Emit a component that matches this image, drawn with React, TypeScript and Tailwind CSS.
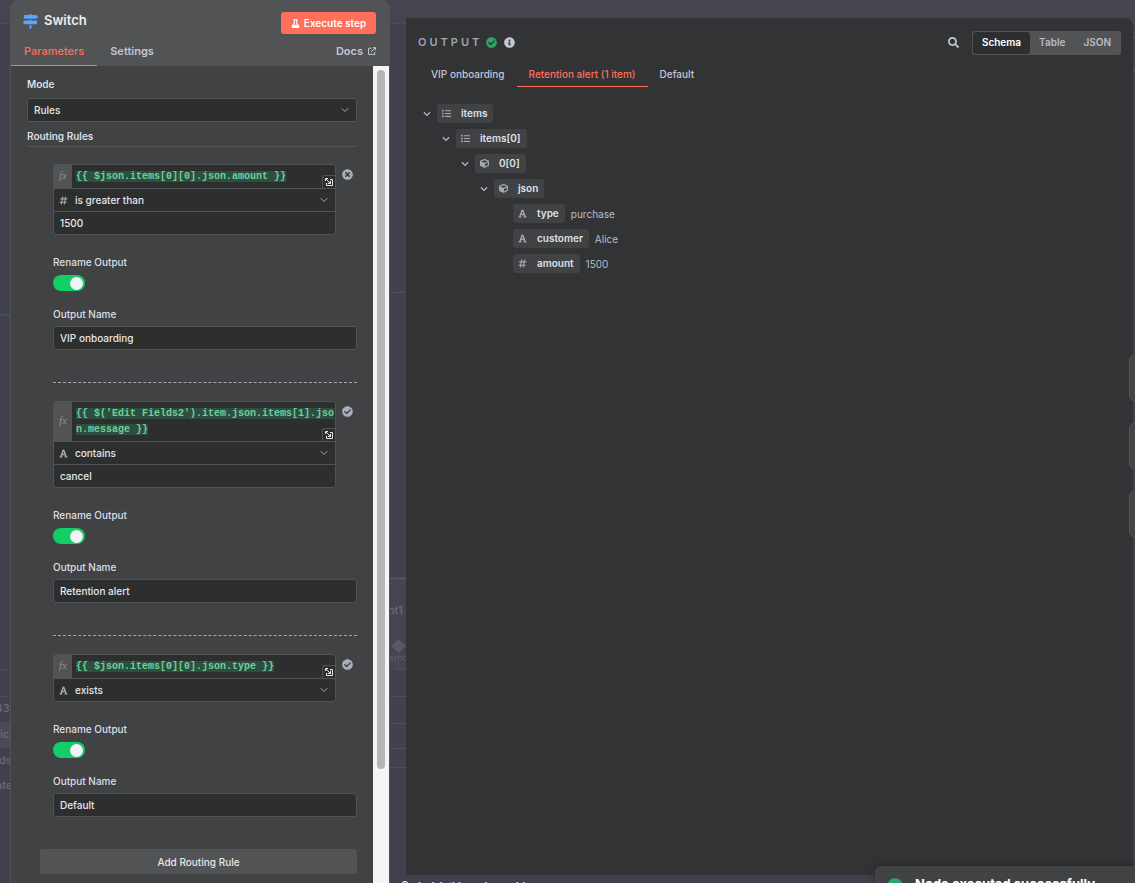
import { useState } from 'react'
import type { ReactNode } from 'react'
import { FaCheckCircle, FaChevronDown, FaCube, FaFlask, FaFont, FaHashtag, FaInfoCircle, FaList, FaMapSigns, FaRegLightbulb, FaSearch, FaTimesCircle } from 'react-icons/fa'
import { FiChevronDown } from 'react-icons/fi'

type Rule = {
    id: number
    expression: string[]
    type: 'number' | 'string'
    operator: string
    value?: string
    valid: boolean
    output: string
}

const rules: Rule[] = [
    {
        id: 1,
        expression: ['{{ $json.items[0][0].json.amount }}'],
        type: 'number',
        operator: 'is greater than',
        value: '1500',
        valid: false,
        output: 'VIP onboarding',
    },
    {
        id: 2,
        expression: ["{{ $('Edit Fields2').item.json.items[1].jso", 'n.message }}'],
        type: 'string',
        operator: 'contains',
        value: 'cancel',
        valid: true,
        output: 'Retention alert',
    },
    {
        id: 3,
        expression: ['{{ $json.items[0][0].json.type }}'],
        type: 'string',
        operator: 'exists',
        valid: true,
        output: 'Default',
    },
]

const branches = ['VIP onboarding', 'Retention alert (1 item)', 'Default']
const views = ['Schema', 'Table', 'JSON']

function ExternalLinkIcon() {
    return (
        <svg className="size-2" viewBox="0 0 8 8" fill="none" stroke="currentColor" aria-hidden="true">
            <path d="M3.5 1.2H.6v6.2h6.2V4.8M4.8.6h2.6v2.6M7.2.8 3 5" />
        </svg>
    )
}

function ResizeIcon() {
    return (
        <svg className="size-2" viewBox="0 0 8 8" fill="none" stroke="currentColor" aria-hidden="true">
            <path d="M.5 3V.5H3M5 1.5h2.5v6h-6V5M1 1l4.5 4.5M2.8 5.5h2.7V2.8" />
        </svg>
    )
}

// Dimmed workflow canvas behind the node detail view
function Canvas() {
    return (
        <div className="absolute inset-0 text-[11px] font-medium text-[#6b6a78]" aria-hidden="true">
            <svg className="absolute inset-0 size-full">
                <defs>
                    <pattern id="dots" x="-1" y="6" width="13" height="13.4" patternUnits="userSpaceOnUse">
                        <rect x="6" y="0" width="1" height="1" fill="#504f5c" />
                    </pattern>
                </defs>
                <rect width="100%" height="646" y="24" fill="url(#dots)" />
                <rect width="100%" height="23" fill="#45444f" />
                <rect width="100%" height="1" y="23" fill="#4c4b56" />
                <path d="M0 314.5 10 315.5M389 293.5 406 291.5" stroke="#3f6064" fill="none" />
                <rect x="0" y="722" width="10" height="26" fill="#4a4955" />
                <path d="M0 669.5h10M0 696.5h10" stroke="#4e4d5a" />
                <rect x="389" y="578" width="17" height="91" fill="#454450" />
                <path d="M389 578.5h17" stroke="#55545f" strokeWidth="2" />
                <path d="M389 646.5h17M398.5 646v24M389 669.5h17M389 696.5h17M389 723.5h17M389 748.5h17M389 767.5h17" stroke="#4e4d5a" />
                <path d="m398.5 639 7 7-7 7-7-7z" fill="#595867" />
                <path d="M1130 37.5h5M1130 70.5h5" stroke="#5a5965" />
            </svg>
            <span className="absolute top-[700px] left-[-9px]">1435</span>
            <span className="absolute top-[726px] left-0">icl</span>
            <span className="absolute top-[752px] left-[-1px]">ds</span>
            <span className="absolute top-[777px] left-[-4px]">ate</span>
            <span className="absolute top-[602px] left-[388px]">nt1</span>
            <span className="absolute top-[651px] left-[389px] text-[9px] text-[#5a5968]">emo</span>
        </div>
    )
}

function TypeIcon({ type, className }: { type: string; className?: string }) {
    if (type === 'array') return <FaList className={className} />
    if (type === 'object') return <FaCube className={className} />
    if (type === 'number') return <FaHashtag className={className} />
    return <FaFont className={className} />
}

function RuleItem({ rule }: { rule: Rule }) {
    return (
        <div className="pl-[26px]">
            <div className="flex items-start">
                <div className="min-w-0 flex-1 divide-y divide-[#525355] overflow-hidden rounded-[3px] border border-[#525355] bg-[#2d2e2e]">
                    <div className="relative flex">
                        <span className="flex w-[18px] shrink-0 items-center justify-center bg-[#525355] pb-1 font-['Liberation_Serif',serif] text-[11px] text-[#8d8e93] italic">
                            fx
                        </span>
                        <div
                            role="textbox"
                            aria-label="Expression"
                            className="min-w-0 flex-1 pt-1 pb-[3px] pl-1 font-['Liberation_Mono',monospace] text-[10px] leading-4 font-bold whitespace-pre text-[#6fcf9b]"
                        >
                            {rule.expression.map((line) => (
                                <div key={line}>
                                    <span className="bg-[#2e4f40]">{line}</span>
                                </div>
                            ))}
                        </div>
                        <button
                            type="button"
                            aria-label="Open expression editor"
                            className="absolute right-0 bottom-0 flex h-[13px] w-[13px] items-center justify-center rounded-tl-[3px] border-t border-l border-[#525355] bg-[#2d2e2e] text-[#e6e7ea]"
                        >
                            <ResizeIcon />
                        </button>
                    </div>
                    <div className="relative flex h-[23px] items-center last:h-[22px]">
                        <TypeIcon type={rule.type} className="absolute left-[5px] size-[9px] text-[#a5a8b4]" />
                        <select aria-label="Operator" className="h-full w-full appearance-none pl-[21px] font-medium text-[#e6e7ea]">
                            <option>{rule.operator}</option>
                        </select>
                        <FiChevronDown className="pointer-events-none absolute right-[5px] size-3 text-[#a5a8b4]" />
                    </div>
                    {rule.value && (
                        <input aria-label="Value" defaultValue={rule.value} className="block h-[22px] w-full px-[6px] font-medium text-[#e6e7ea]" />
                    )}
                </div>
                <span className="flex w-[21px] justify-end pt-[5px] pr-[4px]">
                    {rule.valid ? (
                        <FaCheckCircle className="size-[11px] shrink-0 text-[#aaadba]" />
                    ) : (
                        <FaTimesCircle className="size-[11px] shrink-0 text-[#aaadba]" />
                    )}
                </span>
            </div>
            <label htmlFor={`rename-${rule.id}`} className="mt-[19px] block font-medium">
                Rename Output
            </label>
            <input
                id={`rename-${rule.id}`}
                type="checkbox"
                defaultChecked
                className="mt-[5px] flex h-4 w-8 appearance-none items-center rounded-full bg-[#67686c] px-[2px] before:size-[13px] before:rounded-full before:bg-[#f2f2f8] checked:justify-end checked:bg-[#13ce66]"
            />
            <label htmlFor={`output-${rule.id}`} className="mt-[15px] block font-medium">
                Output Name
            </label>
            <input
                id={`output-${rule.id}`}
                defaultValue={rule.output}
                className="mt-1 block h-6 w-full rounded-[3px] border border-[#525355] bg-[#2d2e2e] px-[6px] font-medium text-[#e6e7ea]"
            />
        </div>
    )
}

function ParametersPanel() {
    return (
        <section className="relative flex w-[380px] shrink-0 flex-col overflow-hidden rounded-t-lg border-x border-[#525355] bg-[#414244]">
            <header className="bg-[#525355]">
                <div className="flex items-end justify-between pt-3 pr-[13px] pl-3">
                    <h1 className="flex h-[18px] items-center gap-[6px] self-start text-[13px] font-semibold text-[#eceef2]">
                        <FaMapSigns className="size-[15px] text-[#5ba4f7]" />
                        Switch
                    </h1>
                    <button type="button" className="flex h-[22px] w-[95px] items-center justify-center gap-1 rounded-[3px] bg-[#ff6f5c] text-[10px] font-semibold text-white">
                        <FaFlask className="size-[9px]" />
                        Execute step
                    </button>
                </div>
                <nav className="flex h-8 items-stretch pr-[13px] text-[11px] font-semibold text-[#c3c6d4]">
                    <a href="#parameters" className="flex items-center border-b border-[#ff6f5c] px-[13px] pt-1 font-medium text-[#ff6f5c]">
                        Parameters
                    </a>
                    <a href="#settings" className="flex items-center px-[13px] pt-[2px]">
                        Settings
                    </a>
                    <a href="#docs" className="ml-auto flex items-center gap-[5px] pt-[2px]">
                        Docs <ExternalLinkIcon />
                    </a>
                </nav>
            </header>

            <div className="flex min-h-0 flex-1">
                <form className="min-w-0 flex-1 overflow-hidden px-4 pt-[10px] text-[10px] leading-4 text-[#dcdee4]">
                    <label htmlFor="mode" className="block font-semibold">
                        Mode
                    </label>
                    <div className="relative mt-[6px] flex items-center">
                        <select id="mode" className="h-6 w-full appearance-none rounded-[3px] border border-[#525355] bg-[#2d2e2e] px-[6px] font-medium text-[#e6e7ea]">
                            <option>Rules</option>
                        </select>
                        <FiChevronDown className="pointer-events-none absolute right-[6px] size-3 text-[#a5a8b4]" />
                    </div>
                    <h2 className="mt-[6px] border-b border-[#525355] pb-[2px] font-semibold">Routing Rules</h2>
                    <div className="mt-[17px]">
                        {rules.map((rule, i) => (
                            <div key={rule.id}>
                                {i > 0 && <div className="mt-8 mb-[18px] ml-[26px] border-t border-dashed border-[#a5a6ab]" />}
                                <RuleItem rule={rule} />
                            </div>
                        ))}
                    </div>
                    <div className="mt-8 pl-[13px]">
                        <button type="button" className="h-[25px] w-full rounded-[3px] bg-[#525355] font-medium text-[#e6e7ea]">
                            Add Routing Rule
                        </button>
                    </div>
                </form>
                <div className="w-4 shrink-0 bg-[#f5f5f5] px-1 pt-1" aria-hidden="true">
                    <div className="h-[86%] rounded-full bg-[#b5b5b5]" />
                </div>
            </div>
        </section>
    )
}

function SchemaRow({ type, name, value, children }: { type: string; name: string; value?: string; children?: ReactNode }) {
    return (
        <li>
            <div className="mb-[6px] flex h-[19px] items-center">
                <span className="flex w-[19px] shrink-0 justify-start">
                    {children && (
                        <button type="button" aria-label={`Collapse ${name}`} className="p-[5px]">
                            <FaChevronDown className="size-2 text-[#b4b7c3]" />
                        </button>
                    )}
                </span>
                <span className="flex h-[19px] items-center rounded-[3px] bg-[#414244] pr-[6px] pl-[5px] font-semibold text-[#dfe1e8]">
                    <TypeIcon type={type} className="mr-[10px] size-[9px] text-[#a5a8b4]" />
                    <span className="pb-px">{name}</span>
                </span>
                {value && <span className="pt-px pl-[6px] text-[#b9bcc8]">{value}</span>}
            </div>
            {children && <ul className="pl-[19px]">{children}</ul>}
        </li>
    )
}

function OutputPanel() {
    const [view, setView] = useState('Schema')
    const [branch, setBranch] = useState(branches[1])

    return (
        <section className="min-h-0 flex-1 rounded-tr-lg bg-[#323335] px-3 pt-3 text-[10px] text-[#c3c6d4]">
            <header className="flex h-[25px] items-center">
                <h2 className="text-[11px] font-semibold tracking-[3px] text-[#a0a3ae]">OUTPUT</h2>
                <FaCheckCircle className="ml-1 size-[11px] text-[#29a568]" />
                <FaInfoCircle className="ml-[7px] size-[11px] text-[#c3c6d4]" />
                <button type="button" aria-label="Search output" className="mr-[13px] ml-auto">
                    <FaSearch className="size-[11px] text-[#c3c6d4]" />
                </button>
                <div className="flex h-6 items-stretch rounded-[3px] bg-[#525355] p-px font-semibold">
                    {views.map((v) => (
                        <button
                            key={v}
                            type="button"
                            onClick={() => setView(v)}
                            className={v === view ? 'rounded-[3px] bg-[#2d2e2e] px-[9px] text-white' : 'px-[9px] text-[#b9bcc8]'}
                        >
                            {v}
                        </button>
                    ))}
                </div>
            </header>
            <nav className="mt-[7px] flex h-[25px] items-stretch pl-px font-medium">
                {branches.map((b) => (
                    <button
                        key={b}
                        type="button"
                        onClick={() => setBranch(b)}
                        className={b === branch ? 'border-b border-[#ff6f5c] px-3 text-[#ff6f5c]' : 'border-b border-transparent px-3'}
                    >
                        {b}
                    </button>
                ))}
            </nav>
            <ul className="mt-[17px]">
                <SchemaRow type="array" name="items">
                    <SchemaRow type="array" name="items[0]">
                        <SchemaRow type="object" name="0[0]">
                            <SchemaRow type="object" name="json">
                                <SchemaRow type="string" name="type" value="purchase" />
                                <SchemaRow type="string" name="customer" value="Alice" />
                                <SchemaRow type="number" name="amount" value="1500" />
                            </SchemaRow>
                        </SchemaRow>
                    </SchemaRow>
                </SchemaRow>
            </ul>
        </section>
    )
}

export default function App() {
    return (
        <div className="relative flex h-screen overflow-hidden bg-[#41404c] font-['Inter',sans-serif]">
            <Canvas />
            <div className="relative flex min-w-0 flex-1 pr-[2px] pl-[10px]">
                <ParametersPanel />
                <div className="ml-4 flex min-w-0 flex-1 flex-col pt-[18px]">
                    <OutputPanel />
                    <a href="#feedback" className="-ml-[6px] flex h-2 shrink-0 items-start gap-2 pt-[3px] text-[10px] leading-4 font-semibold text-white">
                        <FaRegLightbulb className="mt-[3px] size-[10px] shrink-0" />
                        I wish this node would
                    </a>
                </div>
            </div>

            <div className="absolute top-[355px] -right-1 flex flex-col gap-[22px]">
                <div className="h-[46px] w-[10px] rounded-md border border-[#555657] bg-[#434444]" />
                <div className="h-[46px] w-[10px] rounded-md border border-[#555657] bg-[#434444]" />
                <div className="h-[46px] w-[10px] rounded-md border border-[#555657] bg-[#434444]" />
            </div>

            <div role="alert" className="absolute right-0 -bottom-8 flex h-[49px] w-[260px] items-start gap-3 rounded-tl-md bg-[#414244] pt-2 pl-3 shadow-[0_0_8px_rgba(0,0,0,0.3)]">
                <FaCheckCircle className="mt-1 size-4 text-[#29a568]" />
                <p className="text-[13px] leading-5 font-bold text-white">Node executed successfully</p>
            </div>
        </div>
    )
}
